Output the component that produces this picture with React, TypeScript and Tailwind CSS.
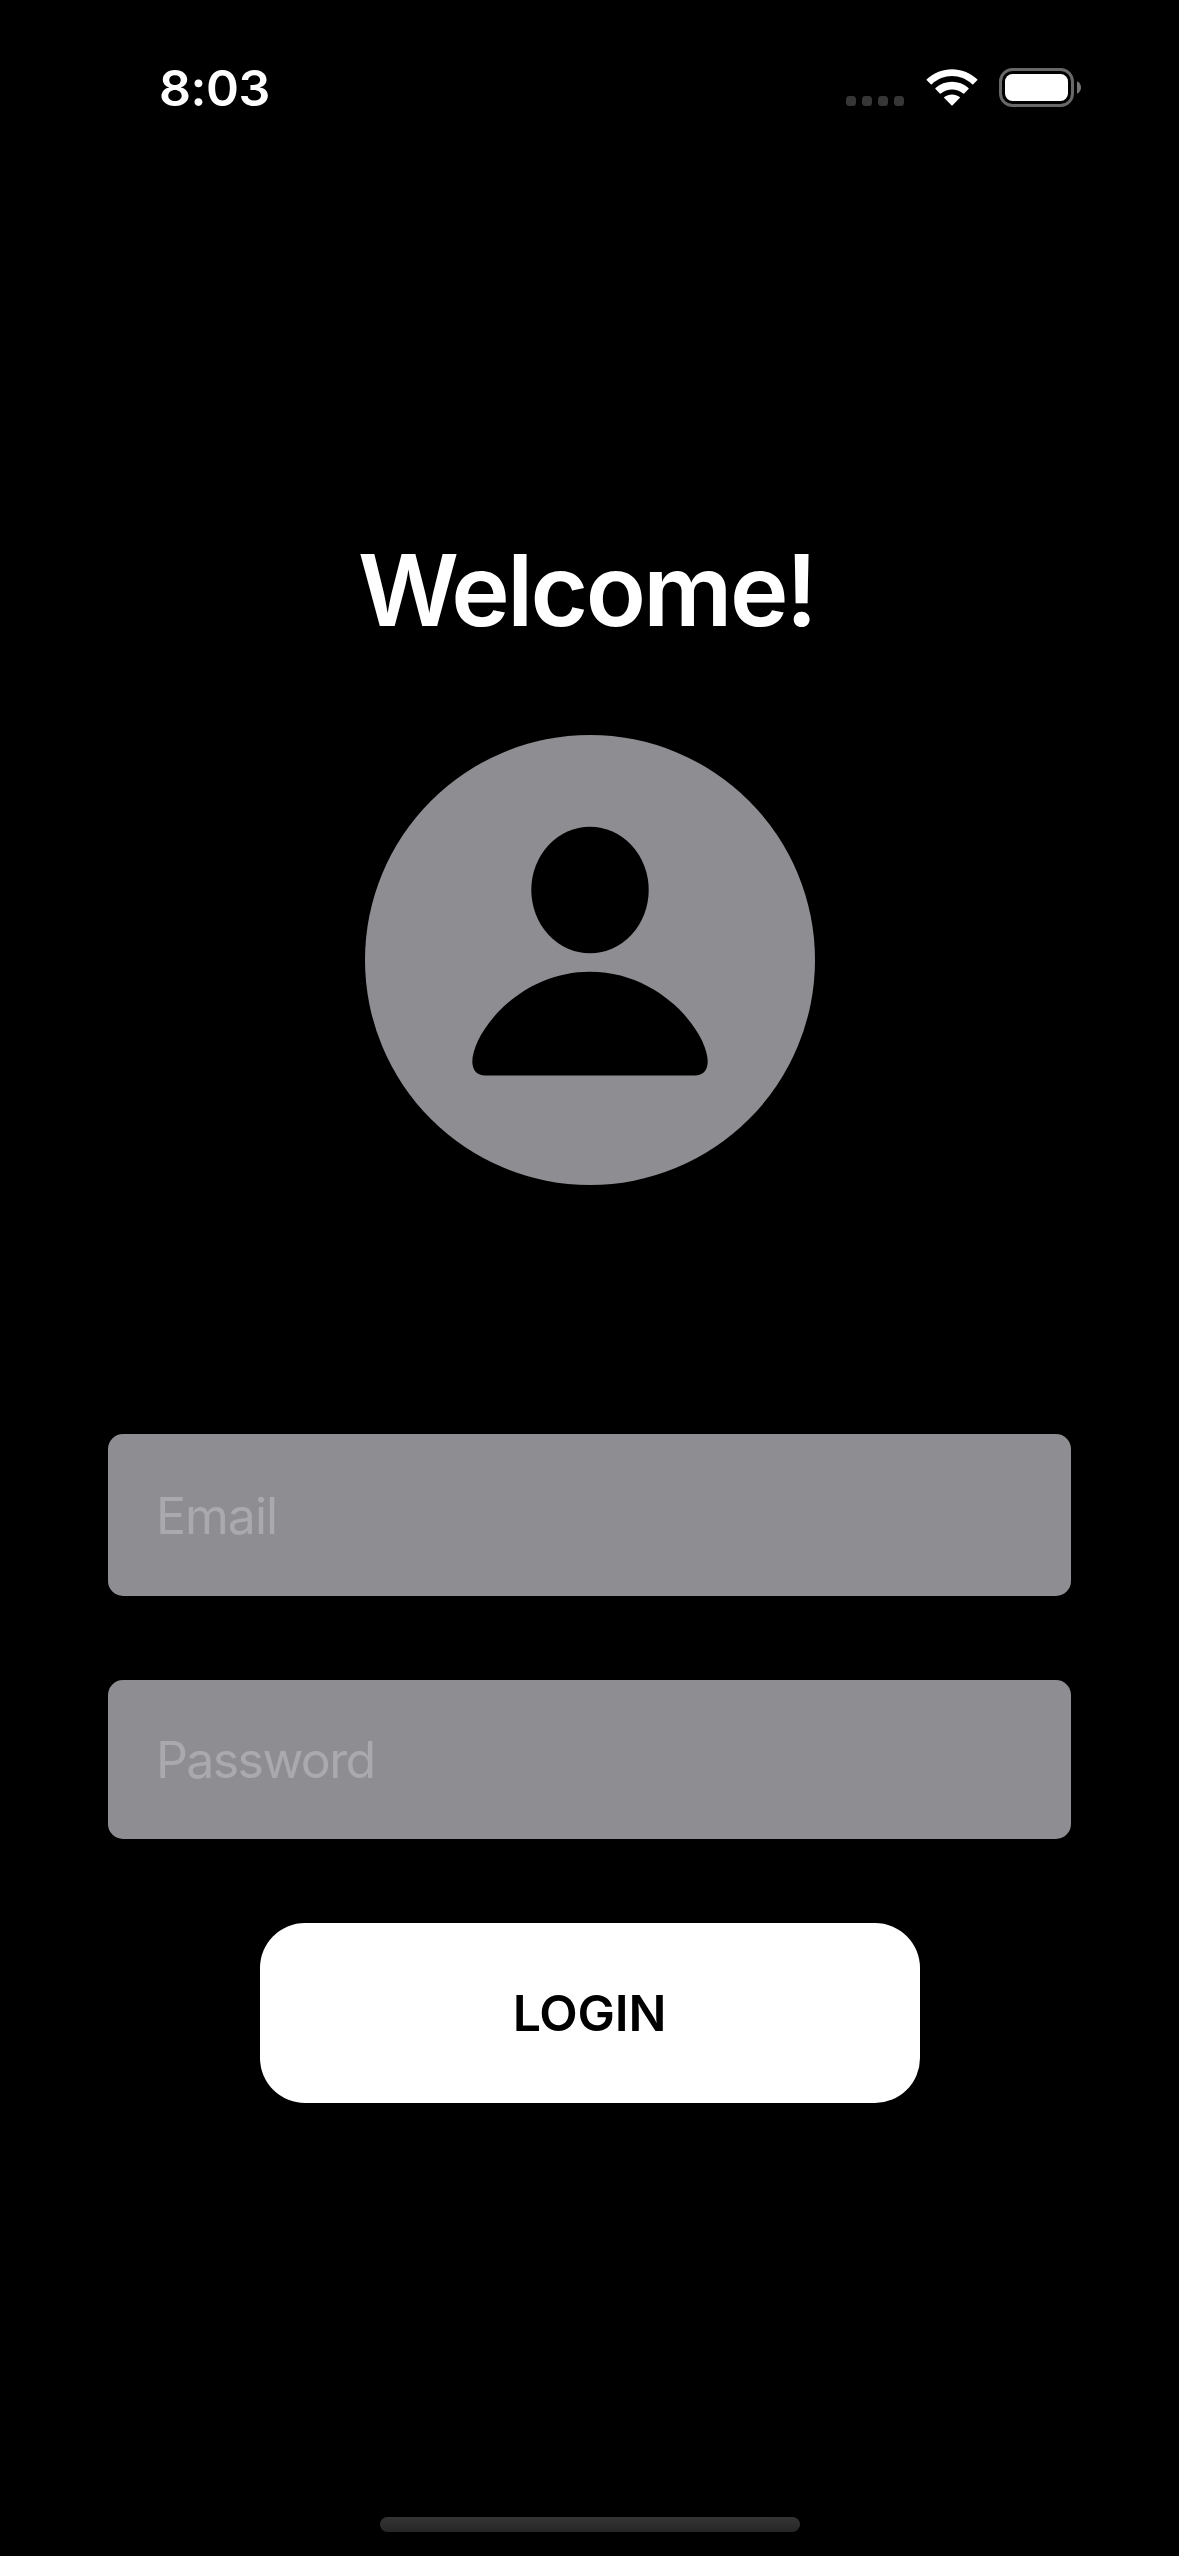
import React from "react";

function SignalDots() {
  return (
    <div className="flex gap-[6px] pt-[27px]">
      <span className="size-[10px] rounded-[3.5px] bg-[#363636]" />
      <span className="size-[10px] rounded-[3.5px] bg-[#363636]" />
      <span className="size-[10px] rounded-[3.5px] bg-[#363636]" />
      <span className="size-[10px] rounded-[3.5px] bg-[#363636]" />
    </div>
  );
}

function WifiIcon() {
  return (
    <svg className="ml-[22px] h-[40px] w-[52px]" viewBox="0 0 52 40" fill="white">
      <path d="M.8 12.3Q.3 11.8.8 11.3C14.8-2.2 37.2-2.2 51.2 11.3Q51.7 11.8 51.2 12.3L47.2 16.3Q46.7 16.8 46.2 16.3C34.8 5.3 17.2 5.3 5.8 16.3Q5.3 16.8 4.8 16.3Z" />
      <path d="M9.5 21.1Q9 20.6 9.5 20.1C18.7 11.7 33.3 11.7 42.5 20.1Q43 20.6 42.5 21.1L38.1 25.5Q37.6 26 37.1 25.5C30.7 20 21.3 20 14.9 25.5Q14.4 26 13.9 25.5Z" />
      <path d="M18.3 30.1Q17.8 29.6 18.3 29.1C22.8 25.6 29.2 25.6 33.7 29.1Q34.2 29.6 33.7 30.1L26.6 37.3Q26 37.9 25.4 37.3Z" />
    </svg>
  );
}

function BatteryIcon() {
  return (
    <svg className="ml-[20px] h-[40px] w-[84px]" viewBox="0 0 84 40">
      <rect x="2.5" y="1.5" width="72" height="36" rx="12" fill="none" stroke="#686868" strokeWidth="3" />
      <rect x="7" y="6" width="63" height="27" rx="7.5" fill="white" />
      <path d="M79 13.3C81.5 14.3 83 16.7 83 19.5C83 22.3 81.5 24.7 79 25.7Z" fill="#757575" />
    </svg>
  );
}

function Avatar() {
  return (
    <svg className="mt-[85px] size-[450px]" viewBox="0 0 450 450">
      <circle cx="225" cy="225" r="225" fill="#8e8d92" />
      <ellipse cx="225" cy="155" rx="58.7" ry="63.2" fill="black" />
      <path
        d="M225 236.8C296.7 236.8 342.7 298.3 342.7 326.7C342.7 335.5 337.500 340.400 330 340.400H120C112.500 340.400 107.300 335.500 107.300 326.700C107.300 298.300 153.300 236.800 225 236.800Z"
        fill="black"
      />
    </svg>
  );
}

export default function App() {
  return (
    <div className="flex h-[2556px] w-[1179px] flex-col items-center overflow-hidden bg-black font-['Inter',sans-serif] text-white">
      <header className="flex h-[118px] w-full justify-between pt-[58px] pr-[97.5px] pl-[159px]">
        <span className="text-[50px] leading-[60px] font-semibold tracking-[-0.5px]">8:03</span>
        <div className="flex items-start pt-[11px]">
          <SignalDots />
          <div className="-mt-px flex">
            <WifiIcon />
            <BatteryIcon />
          </div>
        </div>
      </header>

      <main className="flex w-full flex-1 flex-col items-center pt-[412px]">
        <h1 className="mr-[6px] text-[99px] leading-[120px] font-semibold tracking-[-2.6px]">Welcome!</h1>
        <Avatar />
        <form className="mt-[249px] flex w-[963px] flex-col items-center" onSubmit={(e) => e.preventDefault()}>
          <input
            type="email"
            placeholder="Email"
            aria-label="Email"
            className="h-[162px] w-full rounded-[15px] bg-[#8e8d92] px-12 pt-[2px] text-[50px] tracking-[-1px] outline-none placeholder:text-[#a9a9ae]"
          />
          <input
            type="password"
            placeholder="Password"
            aria-label="Password"
            className="mt-[84px] h-[159px] w-full rounded-[15px] bg-[#8e8d92] px-12 text-[50px] tracking-[-1.6px] outline-none placeholder:text-[#a9a9ae]"
          />
          <button
            type="submit"
            className="mt-[84px] h-[180px] w-[660px] rounded-[45px] bg-white text-[50px] font-semibold tracking-[-0.2px] text-black"
          >
            LOGIN
          </button>
        </form>
      </main>

      <div className="mb-[24px] h-[15px] w-[420px] rounded-full bg-linear-to-b from-[#343434] to-[#262626]" />
    </div>
  );
}
